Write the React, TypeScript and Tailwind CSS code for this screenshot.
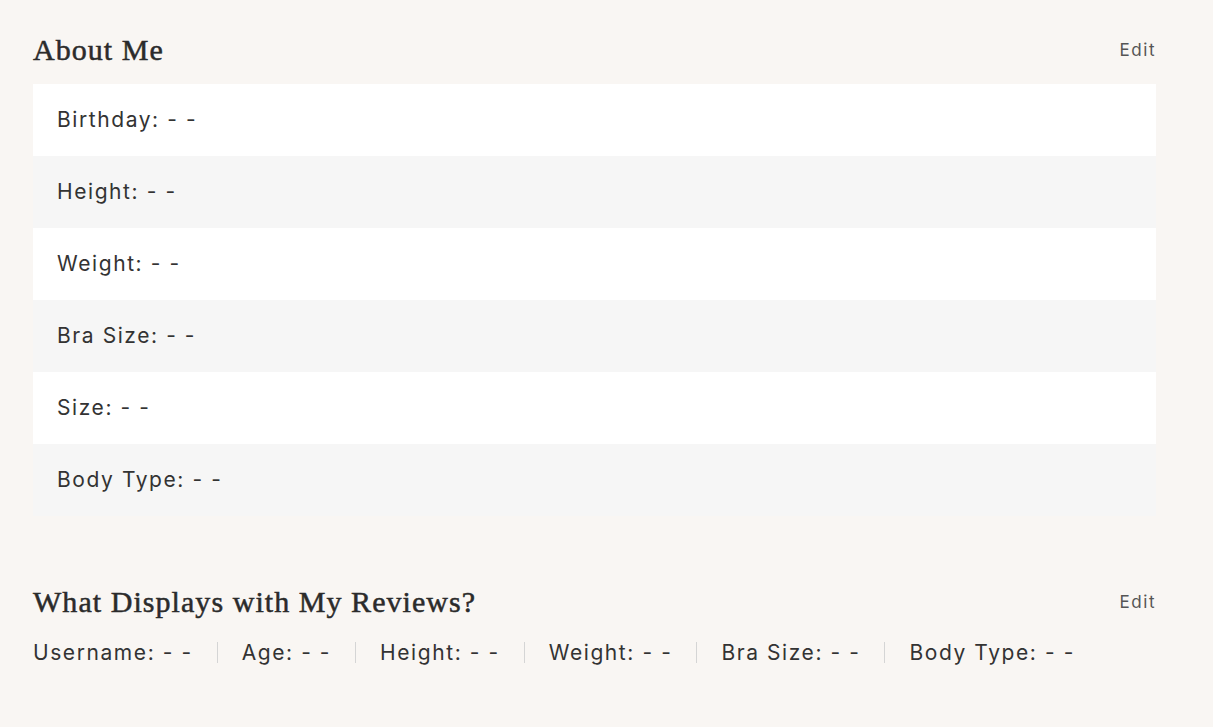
import React from 'react';

const aboutRows = ['Birthday', 'Height', 'Weight', 'Bra Size', 'Size', 'Body Type'];
const reviewFields = ['Username', 'Age', 'Height', 'Weight', 'Bra Size', 'Body Type'];

const serif = { fontFamily: '"Liberation Serif", "DejaVu Serif", serif' };
const sans = { fontFamily: 'Inter, "Liberation Sans", sans-serif' };

function SectionHeader({ title }: { title: string }) {
  return (
    <div className="flex items-center justify-between h-[50px]">
      <h2
        className="text-[30px] font-normal tracking-[0.035em] text-[#2b2b2b] [-webkit-text-stroke:0.5px_#2b2b2b] -mt-[3px]"
        style={serif}
      >
        {title}
      </h2>
      <button className="text-[17px] tracking-[0.09em] text-[#555] -mt-[1px]" style={sans}>
        Edit
      </button>
    </div>
  );
}

export default function App() {
  return (
    <div className="min-h-screen bg-[#f9f6f3] px-[33px] pt-[26px] pb-10 text-[#333]" style={sans}>
      <div className="w-[1123px]">
        {/* About Me */}
        <SectionHeader title="About Me" />
        <div className="mt-[8px]">
          {aboutRows.map((label, i) => (
            <div
              key={label}
              className={`h-[72px] flex items-center px-6 text-[21px] tracking-[0.075em] ${
                i % 2 === 0 ? 'bg-white' : 'bg-[#f6f6f6]'
              }`}
            >
              {label}: - -
            </div>
          ))}
        </div>

        {/* Review display */}
        <div className="mt-[62px]">
          <SectionHeader title="What Displays with My Reviews?" />
          <div className="flex items-center mt-[14px] text-[21px] tracking-[0.075em]">
            {reviewFields.map((label, i) => (
              <div
                key={label}
                className={`flex items-center ${i > 0 ? 'border-l border-[#d5d5d5] pl-6' : ''} ${
                  i < reviewFields.length - 1 ? 'pr-6' : ''
                } h-[21px]`}
              >
                {label}: - -
              </div>
            ))}
          </div>
        </div>
      </div>
    </div>
  );
}
